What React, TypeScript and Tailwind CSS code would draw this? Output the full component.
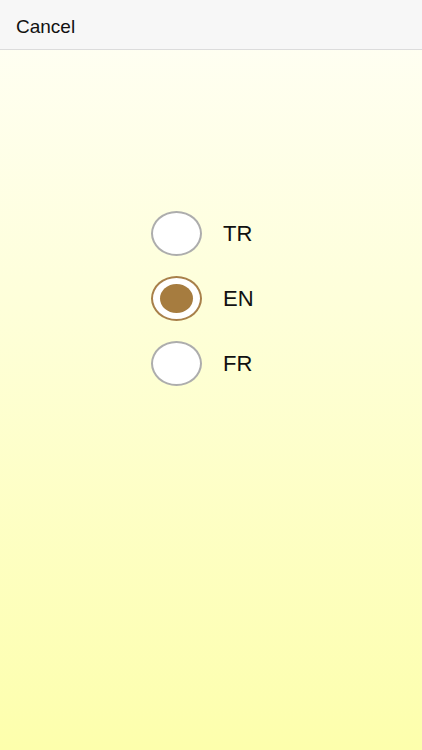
import React, { useState } from "react";

const LANGS = ["TR", "EN", "FR"];

const Radio = ({ checked }: { checked: boolean }) => (
  <div
    className={`flex h-[45px] w-[51px] items-center justify-center rounded-[50%] border-2 bg-white ${
      checked ? "border-[#a8804a]" : "border-[#adadad]"
    }`}
  >
    {checked && <div className="h-[29px] w-[33px] rounded-[50%] bg-[#a67c3f]" />}
  </div>
);

export default function App() {
  const [lang, setLang] = useState("EN");

  return (
    <div
      className="flex h-[750px] w-full flex-col bg-gradient-to-b from-[#fffff6] to-[#fdffac]"
      style={{ fontFamily: '"Liberation Sans", Arial, sans-serif' }}
    >
      {/* Header */}
      <div className="flex h-[50px] shrink-0 items-center border-b border-[#dcdcdc] bg-[#f7f7f7] px-4 pt-[6px]">
        <button className="text-[19px] text-[#111]">Cancel</button>
      </div>

      {/* Language options */}
      <div className="flex flex-col items-start gap-[20px] pl-[151px] pt-[161px]">
        {LANGS.map((l) => (
          <div
            key={l}
            className="flex cursor-pointer items-center gap-[21px]"
            onClick={() => setLang(l)}
          >
            <Radio checked={lang === l} />
            <span className="text-[22px] text-[#111]">{l}</span>
          </div>
        ))}
      </div>
    </div>
  );
}
